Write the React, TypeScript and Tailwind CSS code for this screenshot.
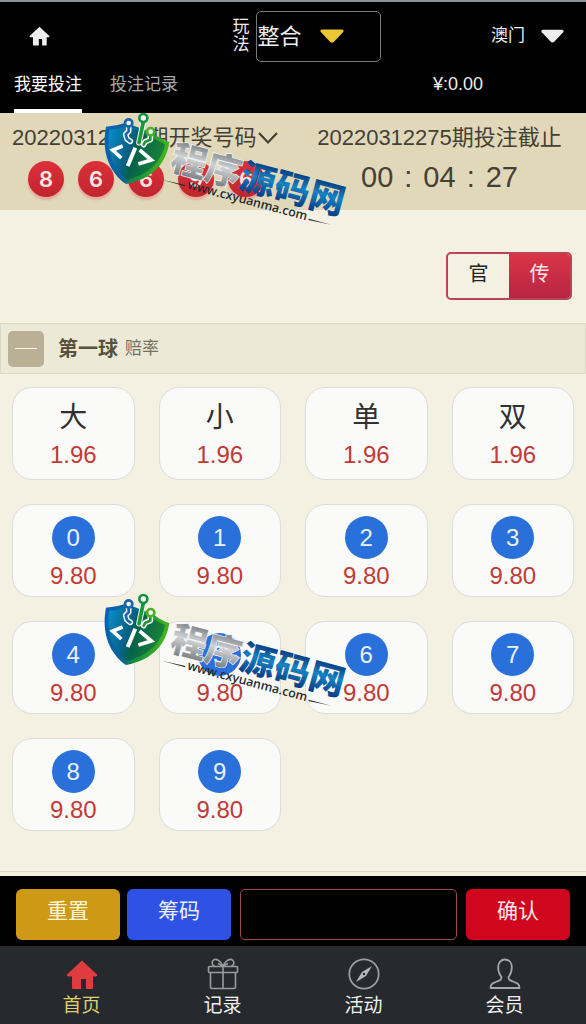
import React from "react";

const balls = [8, 6, 6, 9, 6];
const words = ["大", "小", "单", "双"];
const digits = [0, 1, 2, 3, 4, 5, 6, 7, 8, 9];

function HomeIcon({ className }: { className: string }) {
  return (
    <svg viewBox="0 0 32 29" className={className} fill="currentColor" aria-hidden="true">
      <path d="M16 0.5 L31 14.5 Q32 16 30 16.5 H27 V28 Q27 29 26 29 H20 V19 H15 V29 H7 Q6 29 6 28 V16.5 H2 Q0 16 1 14.5 Z" />
    </svg>
  );
}

function Triangle({ className }: { className: string }) {
  return (
    <svg viewBox="0 0 24 14" className={className} fill="currentColor" aria-hidden="true">
      <path d="M2 0.5 H22 Q24.5 1 23.2 3 L13.8 13 Q12 14.6 10.2 13 L0.8 3 Q-0.5 1 2 0.5 Z" />
    </svg>
  );
}

function GiftIcon() {
  return (
    <svg viewBox="0 0 32 32" className="size-8" fill="none" stroke="#9a9c9f" strokeWidth="1.6" aria-hidden="true">
      <rect x="1.5" y="8.5" width="29" height="6" rx="1" />
      <path d="M3.5 14.5 V29 Q3.5 30.5 5 30.5 H27 Q28.5 30.5 28.5 29 V14.5 M16 8.5 V30.5" />
      <path d="M16 8 C14 3 9 0 6.5 2 C4 4.5 5.5 8 8 8.5 M16 8 C18 3 23 0 25.5 2 C28 4.5 26.5 8 24 8.5 M16 8 L11 5.5 M16 8 L21 5.5" />
    </svg>
  );
}

function CompassIcon() {
  return (
    <svg viewBox="0 0 32 32" className="size-8" fill="none" aria-hidden="true">
      <circle cx="16" cy="16" r="14.7" stroke="#9a9c9f" strokeWidth="1.8" />
      <path d="M24 8 L18 18 L8 24 L14 14 Z" fill="#b4b6b8" />
      <circle cx="16" cy="16" r="1.2" fill="#26292d" />
    </svg>
  );
}

function PersonIcon() {
  return (
    <svg viewBox="0 0 32 32" className="size-8" fill="none" stroke="#a5a7a9" strokeWidth="1.8" strokeLinejoin="round" aria-hidden="true">
      <path d="M12.5 19 C10 16 9.2 13 9.2 9.5 C9.2 4.5 12 1.5 16 1.5 C20 1.5 22.8 4.5 22.8 9.5 C22.8 13 22 16 19.5 19 C19.5 22 21 22.5 24 23.5 C28 25 30.5 26 30.5 30 H1.5 C1.5 26 4 25 8 23.5 C11 22.5 12.5 22 12.5 19 Z" />
    </svg>
  );
}

function Watermark({ className, id }: { className: string; id: string }) {
  return (
    <svg viewBox="30 12 780 360" className={className} aria-hidden="true">
      <defs>
        <linearGradient id={`${id}-rim`} x1="0" y1="0" x2="1" y2="0.2">
          <stop offset="0" stopColor="#0863b5" />
          <stop offset="0.45" stopColor="#07639a" />
          <stop offset="0.6" stopColor="#118a41" />
          <stop offset="1" stopColor="#42b51c" />
        </linearGradient>
        <linearGradient id={`${id}-core`} x1="0" y1="0" x2="1" y2="0.3">
          <stop offset="0" stopColor="#0a91cf" />
          <stop offset="0.45" stopColor="#075f85" />
          <stop offset="0.55" stopColor="#05644f" />
          <stop offset="1" stopColor="#249b2f" />
        </linearGradient>
        <linearGradient id={`${id}-silver`} x1="0" y1="0" x2="0" y2="1">
          <stop offset="0.25" stopColor="#8b9094" />
          <stop offset="0.5" stopColor="#d0d3d5" />
          <stop offset="0.85" stopColor="#7f858a" />
        </linearGradient>
        <linearGradient id={`${id}-blue`} x1="0" y1="0" x2="0" y2="1">
          <stop offset="0.25" stopColor="#0c4386" />
          <stop offset="0.5" stopColor="#1683c4" />
          <stop offset="0.85" stopColor="#073f87" />
        </linearGradient>
      </defs>
      <path d="M48 68 Q80 66 108 56 L190 88 Q210 106 238 114 C229 175 190 225 108 240 C60 207 33 145 48 68 Z" fill={`url(#${id}-rim)`} />
      <path d="M58 77 Q85 76 110 65 L184 97 Q204 114 225 120 C214 173 177 212 110 227 C71 196 48 145 58 77 Z" fill={`url(#${id}-core)`} />
      <path d="M143 80 L110 227 C177 212 214 173 225 120 Z" fill="#045b48" opacity="0.4" />
      <g fill="none" strokeLinecap="round" strokeLinejoin="round">
        <g stroke="#f4faf5" strokeWidth="17">
          <path d="M116 69 V82 L107 91 L111 105 L121 112" />
          <path d="M160 54 L147 116" />
          <path d="M181 94 V107 L166 113 L161 122" />
        </g>
        <path d="M116 69 V82 L107 91 L111 105 L121 112" stroke="#1268ae" strokeWidth="8" />
        <path d="M160 54 L147 116" stroke="#1b973e" strokeWidth="11" />
        <path d="M181 94 V107 L166 113 L161 122" stroke="#27943a" strokeWidth="8" />
      </g>
      <g fill="#eef8ef" strokeWidth="8">
        <circle cx="116" cy="57" r="11" stroke="#1767ad" />
        <circle cx="160" cy="42" r="12" stroke="#159044" />
        <circle cx="182" cy="83" r="11" stroke="#51ac28" />
      </g>
      <g fill="none" stroke="#fff" strokeWidth="11">
        <path d="M98 126 L68 138 L94 162" />
        <path d="M136 131 L113 186" strokeWidth="12" />
        <path d="M149 138 L184 168 L145 180" />
      </g>
      <g transform="rotate(15 236 195)" fontFamily="'Noto Sans CJK SC', sans-serif" fontWeight="900" fontSize="107">
        <text x="236" y="195" fill={`url(#${id}-silver)`} stroke="#f4f4f4" strokeWidth="4" paintOrder="stroke">程序</text>
        <text x="450" y="195" fill={`url(#${id}-blue)`}>源码网</text>
      </g>
      <text x="290" y="253" transform="rotate(15 290 253)" fontFamily="'Open Sans', sans-serif" fontWeight="600" fontSize="37" fill="#252a2d">www.cxyuanma.com</text>
      <path d="M216 227 L286 243 L285 247 Z M656 344 L724 362 L655 348 Z" fill="#252a2d" />
    </svg>
  );
}

function Card({ children }: { children: React.ReactNode }) {
  return (
    <button
      type="button"
      className="flex h-[93px] w-full flex-col items-center rounded-[20px] border border-[#dcdedb] bg-[#fafaf8]"
    >
      {children}
    </button>
  );
}

const odds = "mt-[5px] text-[24px] leading-6 text-[#c23a36]";

function NavItem({ label, active, children }: { label: string; active?: boolean; children: React.ReactNode }) {
  return (
    <a href="#" className={`flex flex-col items-center gap-0.5 text-[19px] leading-7 ${active ? "text-[#ded06a]" : "text-[#f0f0f0]"}`}>
      {children}
      <span>{label}</span>
    </a>
  );
}

export default function App() {
  return (
    <div className="relative flex min-h-screen flex-col bg-[#f4f0e2] font-['Liberation_Sans','Noto_Sans_CJK_SC',sans-serif]">
      <header className="border-t-2 border-[#8a9093] bg-black text-[#ededed]">
        <div className="grid h-[68px] grid-cols-[2fr_3fr] items-center">
          <a href="#" aria-label="首页" className="ml-[29px] w-[21px]">
            <HomeIcon className="h-5 w-[21px]" />
          </a>
          <div className="flex items-center justify-between pr-[22px]">
            <div className="-ml-0.5 flex items-center gap-[7px]">
              <label htmlFor="play" className="w-[17px] text-[17px] leading-[18px]">玩法</label>
              <div className="relative">
                <select id="play" className="h-[51px] w-[125px] appearance-none rounded-[5px] border border-[#777] bg-black text-[22px]">
                  <option>整合</option>
                </select>
                <Triangle className="pointer-events-none absolute top-[18px] right-[37px] h-[14px] w-6 text-[#ecc634]" />
              </div>
            </div>
            <button type="button" className="flex items-center gap-4 text-[17px]">
              澳门
              <Triangle className="h-[14px] w-[23px]" />
            </button>
          </div>
        </div>
        <nav className="flex h-[43px] gap-7 pl-[14px] text-[17px] leading-[29px]">
          <a href="#" className="border-b-4 border-white text-white">我要投注</a>
          <a href="#" className="text-[#aaa]">投注记录</a>
          <span className="ml-auto pr-[103px] text-[18px]">¥:0.00</span>
        </nav>
      </header>

      <section className="grid h-[97px] grid-cols-2 bg-[#e0d8b8] pt-[10px] text-[22px] leading-[30px] text-[#454036]">
        <div>
          <button type="button" className="flex items-center pl-3 whitespace-nowrap">
            20220312274期开奖号码
            <svg viewBox="0 0 22 14" className="h-[14px] w-[22px]" fill="none" stroke="currentColor" strokeWidth="2.2" aria-hidden="true">
              <path d="M2 2 L11 11.5 L20 2" />
            </svg>
          </button>
          <div className="mt-2 flex gap-[14px] pl-7">
            {balls.map((ball, i) => (
              <span
                key={i}
                className="flex size-9 items-center justify-center rounded-full bg-linear-to-b from-[#dc3039] to-[#c0252e] font-['Inter',sans-serif] text-[22px] font-semibold text-[#fde6e3] shadow-[0_3px_2px_#e6aca0]"
              >
                {ball}
              </span>
            ))}
          </div>
        </div>
        <div className="text-center whitespace-nowrap">
          <p>20220312275期投注截止</p>
          <p className="mt-1.5 flex justify-center gap-[11px] text-[29px] leading-9">
            <span>00</span>
            <span>:</span>
            <span>04</span>
            <span>:</span>
            <span>27</span>
          </p>
        </div>
      </section>

      <main className="flex-1">
        <div className="flex justify-end pt-[42px] pr-[14px] pb-[23px]">
          <div className="flex h-12 w-[126px] overflow-hidden rounded-[5px] border-2 border-[#b8455a] text-[20px]">
            <button type="button" className="flex-1 pb-1 text-[#222]">官</button>
            <button type="button" className="flex-1 bg-linear-to-b from-[#d93546] to-[#b82443] pb-1 text-[#fbe3e5]">传</button>
          </div>
        </div>
        <section>
          <div className="flex h-[51px] items-center border border-[#dddac8] bg-[#ece9d7] pl-[7px] text-[#57523e]">
            <button type="button" aria-label="收起" className="flex size-9 items-center justify-center rounded-[5px] bg-[#b9b096]">
              <span className="h-px w-[22px] bg-[#f7f4e8]" />
            </button>
            <h2 className="ml-[14px] text-[20px] font-bold">第一球</h2>
            <span className="ml-[7px] text-[17px] text-[#777260]">赔率</span>
          </div>
          <div className="grid grid-cols-4 gap-6 px-3 pt-[13px] pb-10">
            {words.map((word) => (
              <Card key={word}>
                <span className="mt-[10px] text-[28px] leading-10 text-[#303030]">{word}</span>
                <span className={odds}>1.96</span>
              </Card>
            ))}
            {digits.map((digit) => (
              <Card key={digit}>
                <span className="mt-[11px] flex size-[43px] shrink-0 items-center justify-center rounded-full bg-[#2970db] text-[24px] text-[#e9f2fd]">
                  {digit}
                </span>
                <span className={odds}>9.80</span>
              </Card>
            ))}
          </div>
          <div className="h-[5px] border-t border-[#dddac8]" />
        </section>
      </main>

      <form className="flex h-[70px] items-center gap-[7px] bg-black px-4 pt-1.5 text-[21px]">
        <button type="button" className="h-[51px] w-[104px] rounded-[6px] bg-[#ce9916] pb-1.5 text-[#fff4d5]">重置</button>
        <button type="button" className="h-[51px] w-[104px] rounded-[6px] bg-[#2e53e4] pb-1.5 text-[#eef1ff]">筹码</button>
        <input aria-label="金额" type="text" className="mx-0.5 h-[51px] min-w-0 flex-1 rounded-[5px] border border-[#994b4e] bg-black px-2 text-white" />
        <button type="button" className="h-[51px] w-[104px] rounded-[6px] bg-[#d0061f] pb-1.5 text-[#ffe8e9]">确认</button>
      </form>

      <nav className="grid h-[78px] grid-cols-4 bg-[#26292d] px-[11px] pt-3">
        <NavItem label="首页" active>
          <span className="flex size-8 items-center justify-center"><HomeIcon className="h-[29px] w-8 text-[#e03b3e]" /></span>
        </NavItem>
        <NavItem label="记录"><GiftIcon /></NavItem>
        <NavItem label="活动"><CompassIcon /></NavItem>
        <NavItem label="会员"><PersonIcon /></NavItem>
      </nav>

      <Watermark id="wm-top" className="pointer-events-none absolute top-[108px] left-[100px] h-[120px] w-[260px]" />
      <Watermark id="wm-mid" className="pointer-events-none absolute top-[589px] left-[100px] h-[120px] w-[260px]" />
    </div>
  );
}
